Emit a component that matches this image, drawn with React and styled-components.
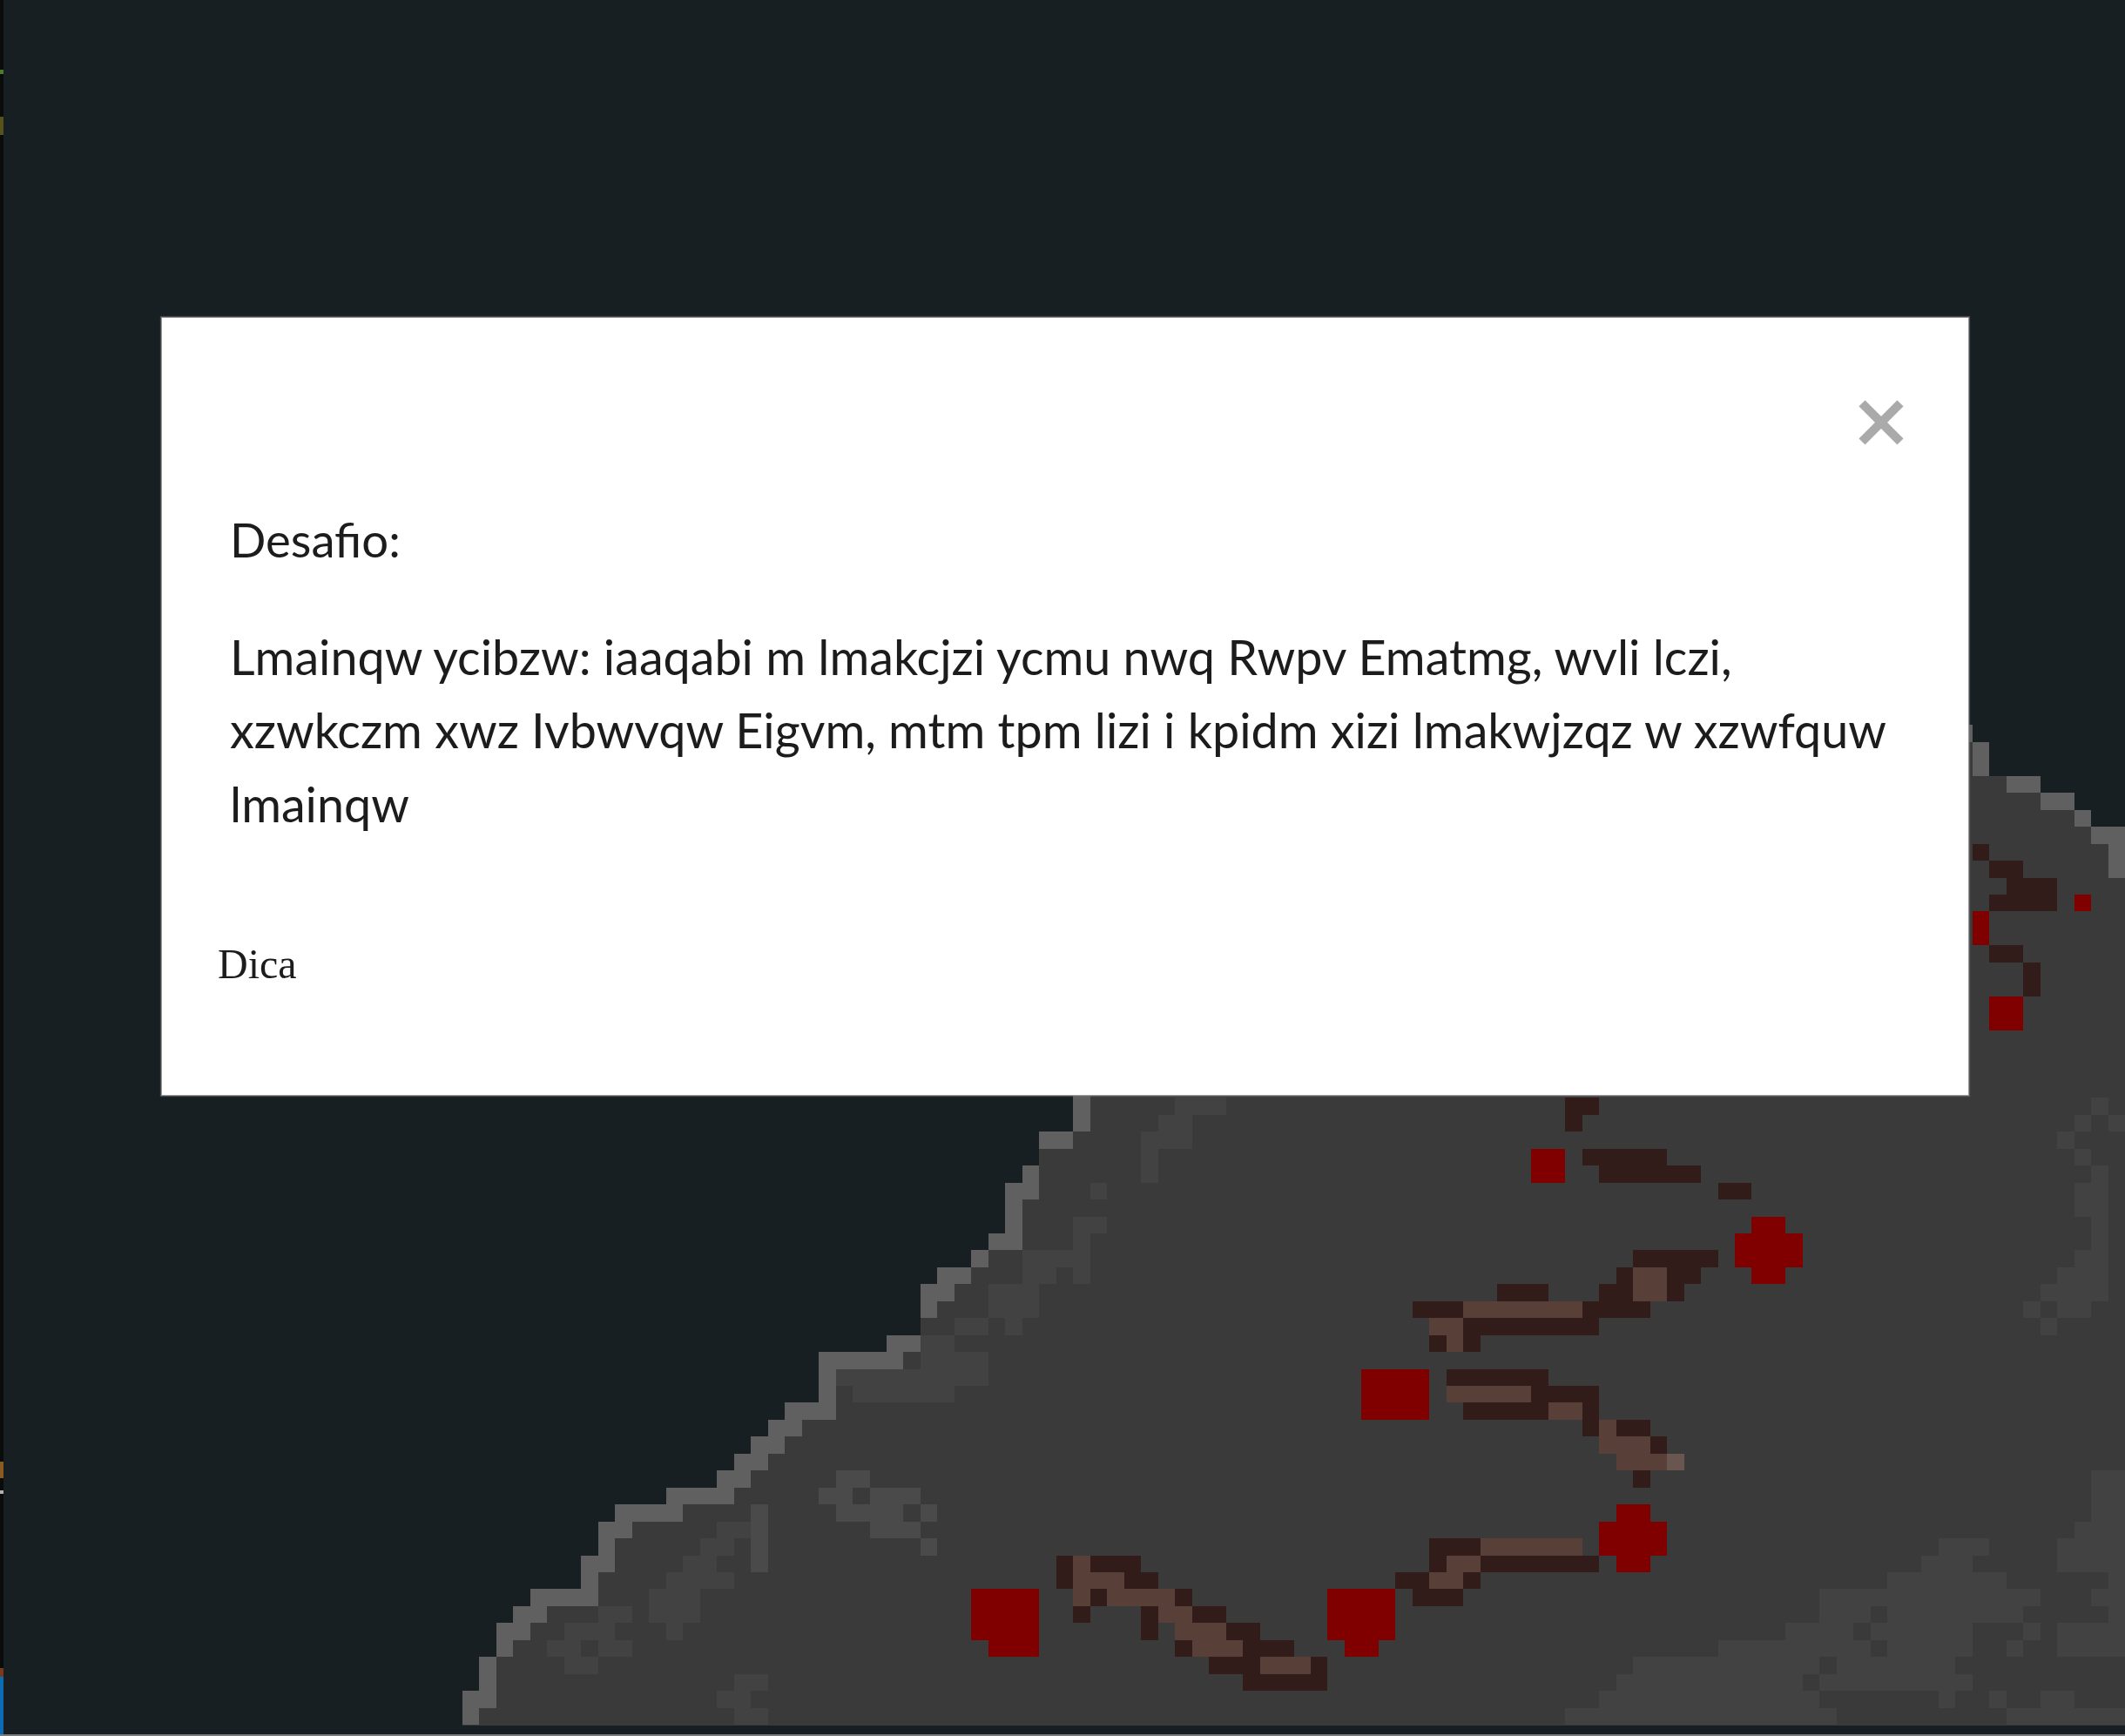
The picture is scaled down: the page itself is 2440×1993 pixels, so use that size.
import React from "react";
import styled, { createGlobalStyle } from "styled-components";

const CELL_W = 19.48;
const CELL_H = 19.45;
const MAP_LEFT = 531;
const MAP_BOTTOM = 1980;
const COLS = 98;

const COLORS = {
  edge: "#606060",
  tint: "#424242",
  soft: "#4a4a4a",
  dark: "#321c1a",
  brown: "#584038",
  pale: "#6a5650",
  red: "#800000",
};

// first filled column of each row, from the bottom row up
const ROW_STARTS = [0,0,1,1,2,2,3,4,7,7,8,8,9,12,15,16,17,18,19,21,21,21,25,27,27,27,28,30,31,32,32,32,33,34,34,36,36,36];
const TOP_ROWS = [[38,60],[39,60],[40,60],[41,60],[42,60],[43,60],[44,60],[45,60],[46,60],[47,60],[48,60],[49,60],[50,60],[51,60],[52,60]];
const TOP_RIGHT = [[53,60,96],[54,60,95],[55,60,93],[56,60,90],[57,60,90],[58,60,89]];

// [color, row, firstCol, lastCol]
const RUNS = [
  // coast outline
  ...[[0,0,0],[1,0,1],[2,1,1],[3,1,1],[4,2,2],[5,2,3],[6,3,4],[7,4,7],[8,7,7],[9,7,8],[10,8,8],[11,8,9],[12,9,12],[13,12,15],[14,15,16],[15,16,17],[16,17,18],[17,18,19],[18,19,21],[19,21,21],[20,21,21],[21,21,25],[22,25,26],[24,27,27],[25,27,28],[26,28,29],[27,30,30],[28,31,32],[29,32,32],[30,32,32],[31,32,33],[32,33,33],[34,34,35],[35,36,36],[36,36,36],[37,36,36],
    [50,97,97],[51,97,97],[52,96,97],[53,95,95],[54,93,94],[55,91,92],[56,89,89],[57,89,89],[58,88,88]].map(([r,a,b]) => ["edge",r,a,b]),
  // soft hills
  ...[[14,22,23],[13,21,22],[13,24,26],[12,22,25],[12,27,27],[11,24,26],[10,27,27],[12,17,17],[11,17,17],[10,17,17],[9,17,17]].map(([r,a,b]) => ["soft",r,a,b]),
  ...[[11,15,16],[10,14,15],[9,13,14],[8,15,15],[8,12,14],[7,11,13],[6,11,13],[5,12,12],[6,8,9],[5,6,8],[4,5,6],[4,8,9],[3,6,7],[2,16,17],[1,15,16],[0,16,17],
    [20,22,30],[19,23,28],[21,27,30],[22,27,28],[23,29,30],[23,32,32],[24,31,33],[25,31,33],[26,33,34],[26,36,36],[27,33,34],[27,35,36],[28,36,36],[29,36,37],[31,37,37],[32,40,40],[33,40,40],[34,40,42],[35,41,42],[36,42,44],
    [36,96,96],[35,95,95],[35,97,97],[34,94,94],[33,95,95],[32,96,96],[31,95,96],[30,95,96],[29,96,96],[28,96,96],[27,95,96],[26,94,96],[25,93,96],[24,92,92],[24,94,95],[23,93,93],
    [14,96,97],[13,96,97],[12,96,97],[11,95,97],[10,87,89],[10,94,97],[9,86,88],[9,94,97],[8,84,90],[8,97,97],[7,80,92],[7,96,97],[6,80,82],[6,84,91],[6,97,97],[5,78,81],[5,83,88],[5,92,92],[5,94,97],[4,74,82],[4,84,88],[4,91,91],[4,94,97],[3,69,79],[3,81,87],[2,68,78],[2,80,87],[2,88,88],[1,67,79],[1,87,87],[1,90,90],[1,93,94],[0,65,80],[0,91,97]].map(([r,a,b]) => ["tint",r,a,b]),
  // rails, dark
  ...[[36,65,66],[35,65,65],[33,66,70],[32,67,72],[31,74,75],[27,69,73],[26,68,68],[26,71,72],[25,71,71],[25,67,68],[24,66,69],[23,59,66],[25,61,63],[24,56,58],[22,57,57],[22,59,59],[20,58,63],[19,63,66],[18,59,63],[18,66,66],[17,66,66],[17,68,69],[16,70,70],[14,69,69],
    [9,35,35],[8,35,35],[9,37,39],[8,39,40],[7,37,37],[7,42,42],[6,36,36],[6,40,40],[5,40,40],[6,43,44],[5,45,46],[4,42,42],[4,46,48],[3,44,46],[3,50,50],[2,46,50],
    [10,57,59],[9,57,57],[9,60,66],[8,55,56],[8,59,59],[7,56,58],
    [51,89,89],[50,90,91],[49,91,93],[48,90,93],[45,90,91],[44,92,92],[43,92,92]].map(([r,a,b]) => ["dark",r,a,b]),
  // rails, brown
  ...[[26,69,70],[25,69,70],[24,59,65],[23,57,58],[22,58,58],[19,58,62],[18,64,65],[17,67,67],[16,67,69],[15,68,70],
    [10,60,65],[9,58,59],[8,57,58],
    [9,36,36],[8,36,38],[7,36,36],[7,38,41],[6,41,42],[5,42,44],[4,43,45],[3,47,49]].map(([r,a,b]) => ["brown",r,a,b]),
  ["pale",15,71,71],
  // red blocks
  ...[[7,30,33],[6,30,33],[5,30,33],[4,31,33],[7,51,54],[6,51,54],[5,51,54],[4,52,53],
    [20,53,56],[19,53,56],[18,53,56],[33,63,64],[32,63,64],
    [29,76,77],[28,75,78],[27,75,78],[26,76,77],[12,68,69],[11,67,70],[10,67,70],[9,68,69],
    [48,95,95],[47,89,89],[46,89,89],[42,90,91],[41,90,91]].map(([r,a,b]) => ["red",r,a,b]),
];

const GlobalStyle = createGlobalStyle`
  html, body {
    margin: 0;
    padding: 0;
    background: #171f23;
  }
`;

const Page = styled.main`
  position: relative;
  width: 2440px;
  height: 1993px;
  box-sizing: border-box;
  padding: 364px 0 0 185px;
  overflow: hidden;
  background: #171f23;
  border-bottom: 2px solid #7c7c7c;
`;

const Strip = styled.div`
  position: absolute;
  left: 0;
  top: 0;
  bottom: 0;
  width: 4px;
  background: linear-gradient(
    to bottom,
    #0a0c0c 0 80px,
    #4f7a2a 80px 85px,
    #0a0c0c 85px 134px,
    #55521c 134px 155px,
    #0a0c0c 155px 1678px,
    #8a5a20 1678px 1697px,
    #0a0c0c 1697px 1711px,
    #b0b0b0 1711px 1715px,
    #0a0c0c 1715px 1915px,
    #7a3a1a 1915px 1925px,
    #0b6cb5 1925px 100%
  );
`;

const MapCanvas = styled.svg`
  position: absolute;
  left: 0;
  top: 0;
`;

const Modal = styled.section`
  position: relative;
  box-sizing: border-box;
  width: 2076px;
  height: 894px;
  padding: 0 78px;
  background: #ffffff;
  border: 1px solid #9a9a9a;
  box-shadow: 0 0 1px 1px rgba(120, 120, 120, 0.5);
`;

const CloseButton = styled.button`
  position: absolute;
  top: 92px;
  right: 72px;
  width: 56px;
  height: 56px;
  padding: 0;
  border: 0;
  background: none;
  display: flex;
  align-items: center;
  justify-content: center;
`;

const Body = styled.div`
  padding-top: 212px;
  font-family: "Lato", sans-serif;
  font-size: 55.7px;
  line-height: 84.5px;
  color: #1c1c1c;
  filter: blur(0.6px);
`;

const Heading = styled.p`
  margin: 0 0 50px;
  font-size: 54.5px;
`;

const Paragraph = styled.p`
  margin: 0;
`;

const Hint = styled.a`
  display: block;
  margin: 112px 0 0 -14px;
  font-family: "Liberation Serif", serif;
  font-size: 48px;
  line-height: 60px;
  color: #1c1c1c;
  filter: blur(0.5px);
`;

export default function App() {
  const h = 1993;
  const x = (c) => MAP_LEFT + c * CELL_W;
  const yTop = (r) => MAP_BOTTOM - (r + 1) * CELL_H;
  return (
    <Page>
      <GlobalStyle />
      <MapCanvas width="2440" height={h} viewBox={`0 0 2440 ${h}`} shapeRendering="crispEdges">
        {ROW_STARTS.map((s, r) => (
          <rect key={`f${r}`} x={x(s)} y={yTop(r)} width={x(COLS) - x(s)} height={CELL_H + 0.5} fill="#3a3a3a" />
        ))}
        {TOP_ROWS.map(([r, s]) => (
          <rect key={`t${r}`} x={x(s)} y={yTop(r)} width={x(COLS) - x(s)} height={CELL_H + 0.5} fill="#3a3a3a" />
        ))}
        {TOP_RIGHT.map(([r, s, e]) => (
          <rect key={`u${r}`} x={x(s)} y={yTop(r)} width={x(e) - x(s)} height={CELL_H + 0.5} fill="#3a3a3a" />
        ))}
        {RUNS.map(([c, r, a, b], i) => (
          <rect key={i} x={x(a)} y={yTop(r)} width={(b - a + 1) * CELL_W} height={CELL_H} fill={COLORS[c]} />
        ))}
      </MapCanvas>
      <Strip />
      <Modal>
        <CloseButton aria-label="Fechar">
          <svg width="56" height="56" viewBox="0 0 56 56">
            <path d="M6 6 L50 50 M50 6 L6 50" stroke="#aaaaaa" strokeWidth="10" fill="none" />
          </svg>
        </CloseButton>
        <Body>
          <Heading>Desafio:</Heading>
          <Paragraph>
            Lmainqw ycibzw: iaaqabi m lmakcjzi ycmu nwq Rwpv Ematmg, wvli lczi, xzwkczm xwz Ivbwvqw Eigvm, mtm tpm lizi i kpidm xizi lmakwjzqz w xzwfquw lmainqw
          </Paragraph>
        </Body>
        <Hint>Dica</Hint>
      </Modal>
    </Page>
  );
}
